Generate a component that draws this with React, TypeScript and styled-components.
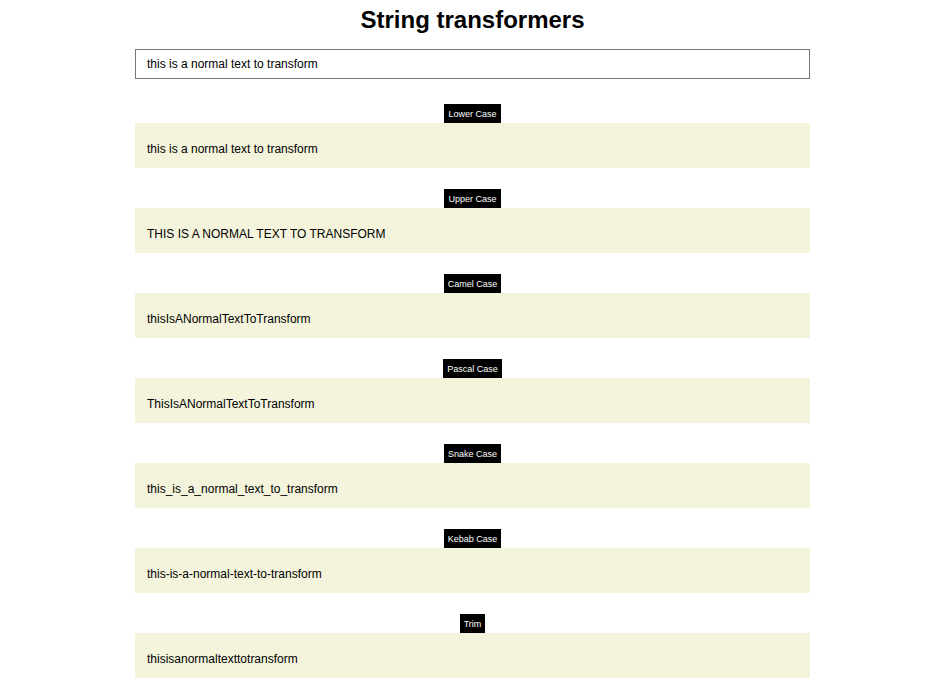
import React, { useState } from "react";
import styled, { createGlobalStyle } from "styled-components";

const Global = createGlobalStyle`
  html, body { margin: 0; padding: 0; background: #fff; }
  body { font-family: "Liberation Sans", Arial, sans-serif; color: #000; }
`;

const Page = styled.div`
  width: 675px;
  margin-left: 135px;
  display: flex;
  flex-direction: column;
`;

const Title = styled.h1`
  margin: 6px 0 0;
  font-size: 24px;
  line-height: 28px;
  font-weight: bold;
  text-align: center;
`;

const Input = styled.input`
  box-sizing: border-box;
  margin-top: 15px;
  width: 100%;
  height: 30px;
  border: 1px solid #767676;
  padding: 0 11px;
  font-family: "Liberation Sans", Arial, sans-serif;
  font-size: 12px;
  color: #000;
  outline: none;
`;

const List = styled.div`
  margin-top: 25px;
  display: flex;
  flex-direction: column;
  gap: 21px;
`;

const Section = styled.div`
  display: flex;
  flex-direction: column;
  align-items: center;
`;

const Badge = styled.div`
  box-sizing: border-box;
  height: 19px;
  line-height: 19px;
  padding: 1px 4px 0;
  background: #000;
  color: #fff;
  font-size: 9px;
`;

const Result = styled.div`
  align-self: stretch;
  box-sizing: border-box;
  height: 45px;
  display: flex;
  align-items: center;
  padding: 6px 12px 0;
  background: #f4f4dc;
  font-size: 12px;
`;

const words = (s: string) => s.trim().split(/\s+/).filter(Boolean);
const cap = (w: string) => w.charAt(0).toUpperCase() + w.slice(1).toLowerCase();

const transforms: { name: string; fn: (s: string) => string }[] = [
  { name: "Lower Case", fn: (s) => s.toLowerCase() },
  { name: "Upper Case", fn: (s) => s.toUpperCase() },
  {
    name: "Camel Case",
    fn: (s) => words(s).map((w, i) => (i === 0 ? w.toLowerCase() : cap(w))).join(""),
  },
  { name: "Pascal Case", fn: (s) => words(s).map(cap).join("") },
  { name: "Snake Case", fn: (s) => words(s).map((w) => w.toLowerCase()).join("_") },
  { name: "Kebab Case", fn: (s) => words(s).map((w) => w.toLowerCase()).join("-") },
  { name: "Trim", fn: (s) => s.replace(/\s+/g, "") },
];

export default function App() {
  const [text, setText] = useState("this is a normal text to transform");
  return (
    <>
      <Global />
      <Page>
        <Title>String transformers</Title>
        <Input value={text} onChange={(e) => setText(e.target.value)} />
        <List>
          {transforms.map((t) => (
            <Section key={t.name}>
              <Badge>{t.name}</Badge>
              <Result>{t.fn(text)}</Result>
            </Section>
          ))}
        </List>
      </Page>
    </>
  );
}
